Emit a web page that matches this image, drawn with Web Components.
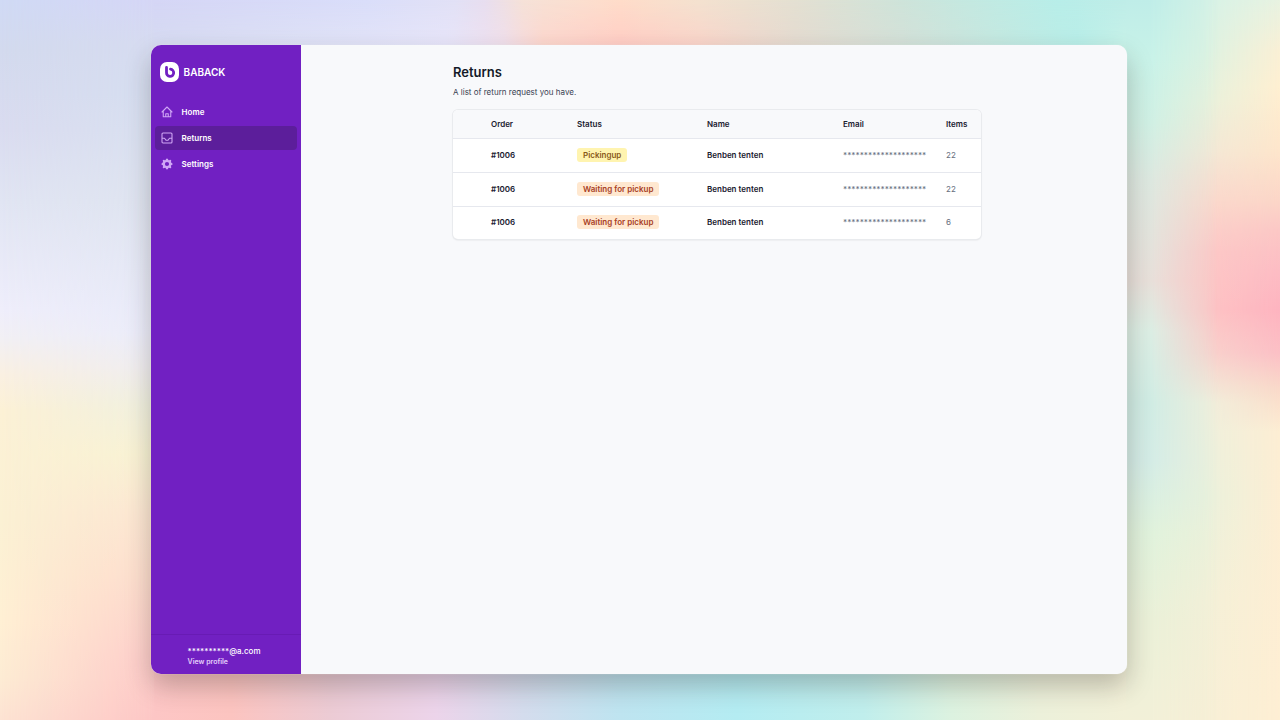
<!DOCTYPE html>
<html lang="en">
<head>
<meta charset="utf-8">
<title>Returns - Baback</title>
<style>
  html, body {
    height: 100%;
  }
  body {
    margin: 0;
    font-family: Inter, "Liberation Sans", sans-serif;
    font-size: 8px;
    line-height: 12px;
    color: #1a2030;
  }
</style>
</head>
<body>
<app-window>
  <side-bar slot="sidebar">
    <nav-item icon="home">Home</nav-item>
    <nav-item icon="inbox" active>Returns</nav-item>
    <nav-item icon="cog">Settings</nav-item>
    <user-card slot="footer" email="**********@a.com"></user-card>
  </side-bar>
  <page-section heading="Returns" description="A list of return request you have.">
    <returns-table></returns-table>
  </page-section>
</app-window>

<script>
const ICONS = {
  home: `
    <path d="M2 12 12 2l10 10M4.500 10v11.500h15V10M9.500 21.500V15.500h5v6" fill="none" stroke="currentColor" stroke-width="2.200" stroke-linecap="round" stroke-linejoin="round"/>
  `,
  inbox: `
    <rect x="2" y="2" width="20" height="20" rx="2" fill="none" stroke="currentColor" stroke-width="2.200"/>
    <path d="M2 12.500h5l3 4h4l3-4h5" fill="none" stroke="currentColor" stroke-width="2.200" stroke-linejoin="round"/>
  `,
  cog: `
    <path transform="translate(-2 -2) scale(1.400)" fill="currentColor" fill-rule="evenodd" d="M11.490 3.170c-.38-1.560-2.600-1.560-2.980 0a1.532 1.532 0 01-2.286.948c-1.372-.836-2.942.734-2.106 2.106.54.886.061 2.042-.947 2.287-1.561.379-1.561 2.600 0 2.978a1.532 1.532 0 01.947 2.287c-.836 1.372.734 2.942 2.106 2.106a1.532 1.532 0 012.287.947c.379 1.561 2.600 1.561 2.978 0a1.533 1.533 0 012.287-.947c1.372.836 2.942-.734 2.106-2.106a1.533 1.533 0 01.947-2.287c1.561-.379 1.561-2.600 0-2.978a1.532 1.532 0 01-.947-2.287c.836-1.372-.734-2.942-2.106-2.106a1.532 1.532 0 01-2.287-.947zM10 13a3 3 0 100-6 3 3 0 000 6z"/>
  `,
};

const RETURNS = [
  { order: "#1006", status: "Pickingup", name: "Benben tenten", email: "********************", items: 22 },
  { order: "#1006", status: "Waiting for pickup", name: "Benben tenten", email: "********************", items: 22 },
  { order: "#1006", status: "Waiting for pickup", name: "Benben tenten", email: "********************", items: 6 },
];

class BaseElement extends HTMLElement {
  connectedCallback() {
    if (!this.shadowRoot) {
      this.attachShadow({ mode: "open" });
    }
    this.shadowRoot.innerHTML = this.render();
  }
}

// pastel wallpaper: each side blends an outer and an inner run of colours
class PastelBackdrop extends BaseElement {
  render() {
    return `
      <style>
        :host {
          position: absolute;
          inset: 0;
          z-index: -1;
          display: grid;
          grid-template-columns: 12% 1fr 12%;
          grid-template-rows: 1fr 1fr;
        }
        div {
          position: relative;
        }
        div::before,
        div::after {
          content: "";
          position: absolute;
          inset: 0;
        }
        .left {
          grid-row: 1 / 3;
          background: linear-gradient(#d0daf5, #d3daee 7%, #dadcf0 18%, #e1e5f3 28%, #efeefb 43%, #f2f0f4 47%, #faf0e2 52%, #fcf1d6 57%, #fbf1d4 72%, #fff0d4 86%, #fdecd4 94%, #fde3d3);
        }
        .left::after {
          background: linear-gradient(#d5d6f6, #d6dbf0 6%, #d6def0 13%, #dfe4f0 28%, #ebecfa 46%, #efedf0 51%, #f0f0e0 56%, #f8f2d4 63%, #fce6d2 71%, #fddccd 80%, #fecdca 91%, #fdc6c5);
          mask-image: linear-gradient(90deg, transparent, #000);
        }
        .top {
          grid-column: 2;
          grid-row: 1;
          background: linear-gradient(90deg, #d5d6f6, #dadefa 22%, #e2e1f6 31%, #e8def0 34%, #f6e2d8 38%, #ffddca 48%, #f4e2d0 56%, #e4e0d2 66%, #cee4da 77%, #c0ebe4 87%, #b8eee9 93%, #bfede8);
        }
        .top::after {
          background: linear-gradient(90deg, #d6dbf0, #dfe2f5 15%, #e8e6fa 30%, #f0dfec 36%, #fdd5cc 40%, #ffcbc4 48%, #fad2c8 56%, #e4dad0 66%, #d4e0d8 77%, #c4e8e0 87%, #b8eee8 95%, #c8f2e8);
          mask-image: linear-gradient(transparent, #000 14%);
        }
        .bottom {
          grid-column: 2;
          grid-row: 2;
          background: linear-gradient(90deg, #fdc6c5, #fcc4c0 8%, #eccbd4 18%, #ecd4ea 29%, #d4dced 38%, #bee4f0 48%, #b4ecf2 60%, #c0eeec 73%, #dcf2e0 82%, #ecf0da 91%, #f2f0d8);
        }
        .right {
          grid-column: 3;
          grid-row: 1 / 3;
          background: linear-gradient(#e8f3e2, #faf0d6 7%, #fff0d2 12%, #fee6cc 21%, #fcd6c8 28%, #fcc8c6 32%, #fdbcc4 38%, #feb4c0 43%, #fcc0c6 49%, #fadaca 54%, #fdeed4 60%, #feefd4);
        }
        .right::before {
          background: linear-gradient(#d6f2e6, #dcf2e2 7%, #e8f1dc 14%, #f2e8d6 21%, #fad8cc 28%, #fcc8c6 35%, #fdc4c4 43%, #f8d2cc 49%, #f0efdc 56%, #e9f1dc 69%, #f3f0d8 83%, #f7efd6);
          mask-image: linear-gradient(90deg, #000 50%, transparent);
        }
        .right::after {
          background: linear-gradient(#bfede8, #c8f2e8 8%, #d0f0e4 17%, #dde8e0 25%, #e8e0da 39%, #dceee4 46%, #d0ece4 56%, #d4ece6 64%, #e0f2dc 74%, #eaf0d8 86%, #f2f0d8);
          mask-image: linear-gradient(90deg, #000 16%, transparent 60%);
        }
      </style>
      <div class="left"></div>
      <div class="top"></div>
      <div class="bottom"></div>
      <div class="right"></div>
    `;
  }
}

class AppWindow extends BaseElement {
  render() {
    return `
      <style>
        :host {
          position: relative;
          z-index: 0;
          display: flex;
          box-sizing: border-box;
          min-height: 100vh;
          padding: 45px 12% 46px;
        }
        .window {
          flex: 1;
          display: grid;
          grid-template-columns: 150px 1fr;
          margin: 0 -1px 0 -3px;
          border-radius: 10px;
          background: #f8f9fb;
          box-shadow: 0 0 1px rgba(255, 255, 255, 0.8), 0 12px 26px rgba(40, 35, 30, 0.27);
          overflow: hidden;
        }
        main {
          display: flex;
          justify-content: center;
          padding: 17px 24px 18px 30px;
        }
      </style>
      <pastel-backdrop></pastel-backdrop>
      <div class="window">
        <slot name="sidebar"></slot>
        <main><slot></slot></main>
      </div>
    `;
  }
}

class SideBar extends BaseElement {
  render() {
    return `
      <style>
        :host {
          display: flex;
          flex-direction: column;
          background: #7120c2;
          color: #fff;
        }
        .brand {
          display: flex;
          align-items: center;
          gap: 4px;
          padding: 17px 9px 18px;
          font-size: 10px;
          font-weight: 600;
          color: inherit;
          text-decoration: none;
        }
        .brand svg {
          width: 20px;
          height: 20px;
        }
        nav {
          flex: 1;
          display: flex;
          flex-direction: column;
          gap: 2px;
          padding: 0 4px;
        }
      </style>
      <a class="brand" href="#">
        <svg viewBox="0 0 20 20" aria-hidden="true">
          <rect width="19" height="20" rx="7" fill="#fff"/>
          <path d="M6.500 5.500v5a3.600 3.600 0 1 0 4-3.300" fill="none" stroke="#7120c2" stroke-width="2.800" stroke-linecap="round"/>
        </svg>
        <span>BABACK</span>
      </a>
      <nav><slot></slot></nav>
      <slot name="footer"></slot>
    `;
  }
}

class NavItem extends BaseElement {
  render() {
    const active = this.hasAttribute("active");
    return `
      <style>
        :host {
          display: block;
        }
        a {
          display: flex;
          align-items: center;
          gap: 9px;
          height: 24px;
          padding: 0 6px;
          border-radius: 4px;
          font-weight: 600;
          color: #fff;
          text-decoration: none;
        }
        a.active {
          background: #5c1e9b;
        }
        svg {
          width: 12px;
          height: 12px;
          color: #cfa6f5;
        }
      </style>
      <a href="#" ${active ? 'class="active" aria-current="page"' : ""}>
        <svg viewBox="0 0 24 24" aria-hidden="true">${ICONS[this.getAttribute("icon")]}</svg>
        <span><slot></slot></span>
      </a>
    `;
  }
}

class UserCard extends BaseElement {
  render() {
    return `
      <style>
        :host {
          display: block;
          border-top: 1px solid #681bb4;
        }
        a {
          display: block;
          padding: 10px 8px 7px 37px;
          color: #fff;
          text-decoration: none;
        }
        .email,
        .profile {
          display: block;
          font-weight: 500;
        }
        .profile {
          font-size: 7px;
          line-height: 10px;
          font-weight: 600;
          color: #e4d0fa;
        }
      </style>
      <a href="#">
        <span class="email">${this.getAttribute("email")}</span>
        <span class="profile">View profile</span>
      </a>
    `;
  }
}

class PageSection extends BaseElement {
  render() {
    return `
      <style>
        :host {
          display: block;
          flex: 0 1 528px;
        }
        h1 {
          margin: 0;
          font-size: 13px;
          line-height: 20px;
          font-weight: 600;
          color: #141a28;
        }
        p {
          margin: 4px 0 12px;
          color: #384152;
        }
      </style>
      <h1>${this.getAttribute("heading")}</h1>
      <p>${this.getAttribute("description")}</p>
      <slot></slot>
    `;
  }
}

class StatusBadge extends BaseElement {
  render() {
    return `
      <style>
        :host {
          display: inline-block;
          padding: 1px 6px;
          border-radius: 3px;
          font-weight: 600;
          color: #a84024;
          background: #ffe8d0;
        }
        :host([kind="picking"]) {
          color: #8a5a18;
          background: #fff4b0;
        }
      </style>
      <slot></slot>
    `;
  }
}

class ReturnsTable extends BaseElement {
  render() {
    const rows = RETURNS.map((item) => `
      <tr>
        <td></td>
        <td class="strong">${item.order}</td>
        <td><status-badge kind="${item.status === "Pickingup" ? "picking" : "waiting"}">${item.status}</status-badge></td>
        <td class="strong">${item.name}</td>
        <td class="masked">${item.email}</td>
        <td>${item.items}</td>
      </tr>
    `).join("");

    return `
      <style>
        :host {
          display: block;
          border-radius: 5px;
          background: #fff;
          box-shadow: 0 0 0 1px #e9ebee, 0 1px 2px rgba(0, 0, 0, 0.14);
          overflow: hidden;
        }
        table {
          width: 100%;
          table-layout: fixed;
          border-collapse: separate;
          border-spacing: 0;
        }
        th, td {
          box-sizing: border-box;
          padding: 0;
          border-bottom: 1px solid #e6e8ee;
          text-align: left;
          vertical-align: middle;
          white-space: nowrap;
        }
        th {
          height: 29px;
          font-weight: 600;
          background: #f8f9fb;
        }
        td {
          height: 34px;
          padding-bottom: 2px;
          color: #687080;
        }
        tr:last-child td {
          height: 32px;
          border-bottom: 0;
        }
        thead tr:last-child th {
          border-bottom: 1px solid #e6e8ee;
        }
        td.strong {
          font-weight: 600;
          color: #1a2030;
        }
        .masked {
          font-weight: 500;
        }
        .pick { width: 38px; }
        .order { width: 86px; }
        .status { width: 130px; }
        .name { width: 136px; }
        .email { width: 103px; }
      </style>
      <table>
        <thead>
          <tr>
            <th class="pick"></th>
            <th class="order">Order</th>
            <th class="status">Status</th>
            <th class="name">Name</th>
            <th class="email">Email</th>
            <th>Items</th>
          </tr>
        </thead>
        <tbody>${rows}</tbody>
      </table>
    `;
  }
}

customElements.define("pastel-backdrop", PastelBackdrop);
customElements.define("app-window", AppWindow);
customElements.define("side-bar", SideBar);
customElements.define("nav-item", NavItem);
customElements.define("user-card", UserCard);
customElements.define("page-section", PageSection);
customElements.define("status-badge", StatusBadge);
customElements.define("returns-table", ReturnsTable);
</script>
</body>
</html>
